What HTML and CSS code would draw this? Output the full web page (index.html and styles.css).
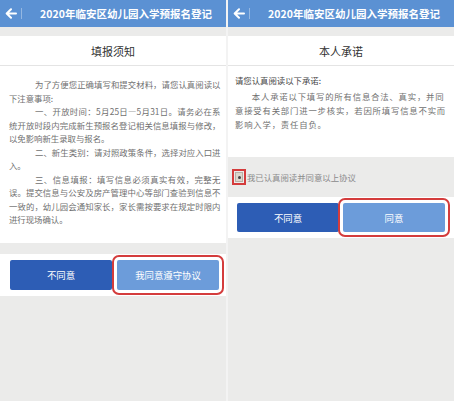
FILE: index.html
```html
<!DOCTYPE html>
<html lang="zh-CN">
<head>
<meta charset="utf-8">
<title>2020年临安区幼儿园入学预报名登记</title>
<link rel="stylesheet" href="styles.css">
</head>
<body>
<div class="screens">
  <section class="phone phone-a">
    <header class="bar">
      <svg class="arrow" width="12" height="11" viewBox="0 0 12 11"><path d="M11 5.5H2 M6 1.2L1.7 5.5L6 9.8" fill="none" stroke="#fff" stroke-width="2" stroke-linecap="round" stroke-linejoin="round"/></svg>
      <span class="sep"></span>
      <h1>2020年临安区幼儿园入学预报名登记</h1>
    </header>
    <div class="strip"></div>
    <h2 class="title">填报须知</h2>
    <div class="notice">
      <p>为了方便您正确填写和提交材料，请您认真阅读以下注意事项:</p>
      <p>一、开放时间：5月25日—5月31日。请务必在系统开放时段内完成新生预报名登记相关信息填报与修改，以免影响新生录取与报名。</p>
      <p>二、新生类别：请对照政策条件，选择对应入口进入。</p>
      <p>三、信息填报：填写信息必须真实有效，完整无误。提交信息与公安及房产管理中心等部门查验到信息不一致的，幼儿园会通知家长，家长需按要求在规定时限内进行现场确认。</p>
    </div>
    <div class="band"></div>
    <div class="actions actions-a">
      <button class="btn btn-dark">不同意</button>
      <button class="btn btn-light marked">我同意遵守协议</button>
    </div>
    <div class="fill"></div>
  </section>

  <section class="phone phone-b">
    <header class="bar">
      <svg class="arrow" width="12" height="11" viewBox="0 0 12 11"><path d="M11 5.5H2 M6 1.2L1.7 5.5L6 9.8" fill="none" stroke="#fff" stroke-width="2" stroke-linecap="round" stroke-linejoin="round"/></svg>
      <span class="sep"></span>
      <h1>2020年临安区幼儿园入学预报名登记</h1>
    </header>
    <div class="strip"></div>
    <h2 class="title">本人承诺</h2>
    <div class="pledge">
      <p class="lead">请您认真阅读以下承诺:</p>
      <p class="body">本人承诺以下填写的所有信息合法、真实，并同意接受有关部门进一步核实，若因所填写信息不实而影响入学，责任自负。</p>
    </div>
    <label class="agree">
      <span class="check"></span>
      <span>我已认真阅读并同意以上协议</span>
    </label>
    <div class="actions actions-b">
      <button class="btn btn-dark">不同意</button>
      <button class="btn btn-light marked">同意</button>
    </div>
    <div class="fill"></div>
  </section>
</div>
</body>
</html>
```
FILE: styles.css
```css
* {
  box-sizing: border-box;
  margin: 0;
  padding: 0;
}

body {
  width: 454px;
  height: 401px;
  overflow: hidden;
  background: #f3f3f3;
  font-family: "Noto Sans CJK SC", "Noto Sans", sans-serif;
}

.screens {
  display: flex;
  gap: 2px;
  height: 401px;
}

.phone {
  width: 226px;
  display: flex;
  flex-direction: column;
  background: #ebebea;
}

.bar {
  height: 27px;
  flex: none;
  display: flex;
  align-items: center;
  background: #5b91d3;
  color: #fff;
}

.arrow {
  margin-left: 5px;
  flex: none;
}

.sep {
  width: 1px;
  height: 11px;
  margin-left: 4px;
  background: rgba(255, 255, 255, 0.35);
  flex: none;
}

.bar h1 {
  flex: 1;
  text-align: center;
  padding-left: 4px;
  font-size: 10.5px;
  font-weight: 700;
  line-height: 27px;
  white-space: nowrap;
}

.strip {
  height: 9px;
  flex: none;
}

.title {
  height: 30px;
  flex: none;
  display: flex;
  align-items: center;
  justify-content: center;
  background: #fff;
  border-bottom: 1px solid #e4e4e4;
  font-size: 11px;
  font-weight: 400;
  color: #333;
}

.notice {
  background: #fff;
  padding: 12px 5.5px 16px 9px;
  font-size: 8.4px;
  line-height: 13.5px;
  color: #707070;
  text-align: justify;
}

.notice p {
  text-indent: 26px;
}

.band {
  height: 11px;
  flex: none;
}

.actions {
  display: flex;
  background: #fff;
  flex: none;
}

.actions-a {
  gap: 5px;
  padding: 6px 7px 6px 10px;
}

.actions-b {
  gap: 4px;
  padding: 6px 9px 6px 9px;
}

.btn {
  flex: 1;
  height: 30px;
  border: 0;
  border-radius: 2px;
  color: #fff;
  font-family: inherit;
  font-size: 9.4px;
}

.actions-b .btn {
  height: 29px;
}

.btn-dark {
  background: #2d5db5;
}

.btn-light {
  background: #6c9cda;
}

.marked {
  outline: 2px solid #d43c3c;
  outline-offset: 3px;
}

.fill {
  flex: 1;
}

.pledge {
  background: #fff;
  padding: 7px 6px 26px 7px;
  font-size: 8.4px;
  line-height: 14px;
  color: #707070;
}

.pledge .lead {
  color: #464646;
  margin-bottom: 2px;
}

.pledge .body {
  text-indent: 2em;
  letter-spacing: 0.8px;
}

.agree {
  height: 40px;
  flex: none;
  display: flex;
  align-items: center;
  gap: 4px;
  padding-left: 7px;
  font-size: 8.4px;
  color: #8a8a8a;
}

.check {
  width: 8px;
  height: 10px;
  flex: none;
  display: flex;
  align-items: center;
  justify-content: center;
  background: #ddd6cc;
  border: 1px solid #b8b0a6;
  outline: 2px solid #d43c3c;
  outline-offset: 1px;
}

.check::after {
  content: "";
  width: 3px;
  height: 3px;
  border-radius: 50%;
  background: #444;
}
```
